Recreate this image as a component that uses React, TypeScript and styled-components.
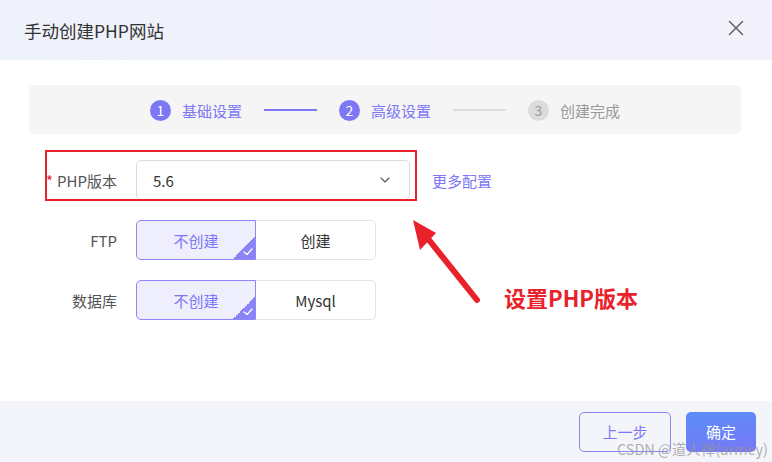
import React from "react";
import styled, { createGlobalStyle, css } from "styled-components";
import { X, ChevronDown } from "lucide-react";

const GlobalStyle = createGlobalStyle`
  html, body {
    margin: 0;
    padding: 0;
    background: #fff;
  }
  body {
    font-family: "Noto Sans CJK SC", "Noto Sans", "Liberation Sans", sans-serif;
    font-size: 14px;
    color: #333;
  }
  * {
    box-sizing: border-box;
  }
`;

const Dialog = styled("div")`
  position: relative;
  width: 772px;
  height: 462px;
  display: flex;
  flex-direction: column;
  background: #fff;
  overflow: hidden;
`;

const Header = styled("div")`
  height: 60px;
  flex-shrink: 0;
  display: flex;
  align-items: center;
  justify-content: space-between;
  padding: 0 23px 0 24px;
  background: linear-gradient(90deg, #eef2fb 0%, #f3f0fb 100%);
`;

const Title = styled("h1")`
  margin: 0;
  font-size: 17.5px;
  font-weight: 400;
  color: #333;
`;

const CloseButton = styled("button")`
  border: none;
  background: transparent;
  padding: 0;
  display: flex;
  color: #666;
  cursor: pointer;
  margin-top: -5px;
`;

const Body = styled("div")`
  flex: 1;
  position: relative;
  padding: 25px 31px 0 29px;
`;

const Steps = styled("div")`
  height: 49px;
  border-radius: 5px;
  background: #f5f5f5;
  display: flex;
  align-items: center;
  justify-content: center;
  padding-top: 1px;
`;

const Step = styled("div")<{ $active: boolean }>`
  display: flex;
  align-items: center;
  gap: 11px;
  font-size: 15px;
  color: ${({ $active }) => ($active ? "#7d77f6" : "#999")};
`;

const StepNum = styled("span")<{ $active: boolean }>`
  width: 21px;
  height: 21px;
  border-radius: 50%;
  display: flex;
  align-items: center;
  justify-content: center;
  font-size: 14px;
  background: ${({ $active }) => ($active ? "#7d77f6" : "#dcdcdc")};
  color: ${({ $active }) => ($active ? "#fff" : "#999")};
`;

const StepLine = styled("span")<{ $active: boolean }>`
  width: 53px;
  height: 2px;
  margin: 0 22px;
  background: ${({ $active }) => ($active ? "#7d77f6" : "#dcdcdc")};
`;

const Form = styled("div")`
  margin-top: 26px;
  display: flex;
  flex-direction: column;
  gap: 20px;
`;

const Row = styled("div")`
  display: flex;
  align-items: center;
  height: 40px;
`;

const Label = styled("label")`
  width: 88px;
  text-align: right;
  margin-right: 19px;
  font-size: 15px;
  color: #555;
`;

const Required = styled("span")`
  color: #e8212b;
  margin-right: 4px;
`;

const Select = styled("div")`
  width: 274px;
  height: 40px;
  border: 1px solid #dcdcdc;
  border-radius: 5px;
  display: flex;
  align-items: center;
  justify-content: space-between;
  padding: 0 16px 0 16px;
  font-size: 15px;
  color: #333;
`;

const MoreLink = styled("a")`
  margin-left: 22px;
  font-size: 15px;
  color: #7d77f6;
  cursor: pointer;
`;

const Segment = styled("div")`
  display: flex;
`;

const SegButton = styled("button")<{ $selected: boolean }>`
  position: relative;
  width: 120px;
  height: 40px;
  font-family: inherit;
  font-size: 15px;
  border: 1px solid #e4e4e4;
  background: #fff;
  color: #333;
  overflow: hidden;
  cursor: pointer;

  &:first-child {
    border-radius: 5px 0 0 5px;
  }
  &:last-child {
    border-radius: 0 5px 5px 0;
    border-left: none;
  }

  ${({ $selected }) =>
    $selected &&
    css`
      background: #efeefd;
      border-color: #8d86f6;
      color: #7d77f6;
    `}
`;

const Corner = styled("span")`
  position: absolute;
  right: 0;
  bottom: 0;
  width: 22px;
  height: 22px;
  background: linear-gradient(135deg, transparent 50%, #8a83f6 50%);
  display: flex;
  align-items: flex-end;
  justify-content: flex-end;
  padding: 0 2px 3px 0;
`;

const Highlight = styled("div")`
  position: absolute;
  left: 45px;
  top: 90px;
  width: 372px;
  height: 51px;
  border: 2px solid #e8212b;
  pointer-events: none;
`;

const Arrow = styled("svg")`
  position: absolute;
  left: 405px;
  top: 155px;
  pointer-events: none;
`;

const Callout = styled("div")`
  position: absolute;
  left: 504px;
  top: 221px;
  font-size: 22px;
  font-weight: 700;
  color: #e8212b;
`;

const Footer = styled("div")`
  height: 61px;
  flex-shrink: 0;
  display: flex;
  align-items: center;
  justify-content: flex-end;
  gap: 15px;
  padding: 0 16px 0 0;
  background: #f4f5fa;
`;

const Button = styled("button")<{ $primary?: boolean }>`
  height: 40px;
  padding: 0;
  border-radius: 5px;
  font-family: inherit;
  font-size: 15px;
  cursor: pointer;
  ${({ $primary }) =>
    $primary
      ? css`
          width: 70px;
          border: none;
          color: #fff;
          background: linear-gradient(170deg, #5a8ef9 0%, #7877f6 100%);
        `
      : css`
          width: 92px;
          border: 1px solid #8d86f6;
          color: #7d77f6;
          background: transparent;
        `}
`;

const Watermark = styled("div")`
  position: absolute;
  right: 4px;
  bottom: 3px;
  font-size: 14.5px;
  color: rgba(150, 150, 150, 0.75);
  pointer-events: none;
  white-space: nowrap;
`;

const Check = () => (
  <svg width="10" height="8" viewBox="0 0 10 8" fill="none">
    <polyline
      points="1 4 4 6.5 9 1"
      stroke="#fff"
      strokeWidth="1.3"
      strokeLinecap="round"
      strokeLinejoin="round"
    />
  </svg>
);

const steps = [
  { n: 1, label: "基础设置", active: true },
  { n: 2, label: "高级设置", active: true },
  { n: 3, label: "创建完成", active: false },
];

function Toggle({ options }: { options: string[] }) {
  return (
    <Segment>
      {options.map((o, i) => (
        <SegButton key={o} $selected={i === 0}>
          {o}
          {i === 0 && (
            <Corner>
              <Check />
            </Corner>
          )}
        </SegButton>
      ))}
    </Segment>
  );
}

export default function App() {
  return (
    <>
      <GlobalStyle />
      <Dialog>
        <Header>
          <Title>手动创建PHP网站</Title>
          <CloseButton aria-label="close">
            <X size={26} strokeWidth={1.4} />
          </CloseButton>
        </Header>
        <Body>
          <Steps>
            {steps.map((s, i) => (
              <React.Fragment key={s.n}>
                {i > 0 && <StepLine $active={s.active} />}
                <Step $active={s.active}>
                  <StepNum $active={s.active}>{s.n}</StepNum>
                  {s.label}
                </Step>
              </React.Fragment>
            ))}
          </Steps>
          <Form>
            <Row>
              <Label>
                <Required>*</Required>PHP版本
              </Label>
              <Select>
                5.6
                <ChevronDown size={16} color="#555" strokeWidth={1.6} />
              </Select>
              <MoreLink>更多配置</MoreLink>
            </Row>
            <Row>
              <Label>FTP</Label>
              <Toggle options={["不创建", "创建"]} />
            </Row>
            <Row>
              <Label>数据库</Label>
              <Toggle options={["不创建", "Mysql"]} />
            </Row>
          </Form>
          <Highlight />
          <Arrow width="80" height="95" viewBox="0 0 80 95">
            <line
              x1="72"
              y1="85"
              x2="20"
              y2="20"
              stroke="#e8212b"
              strokeWidth="6"
              strokeLinecap="round"
            />
            <polygon points="8,5 31,18 15,35" fill="#e8212b" />
          </Arrow>
          <Callout>设置PHP版本</Callout>
        </Body>
        <Footer>
          <Button>上一步</Button>
          <Button $primary>确定</Button>
        </Footer>
        <Watermark>CSDN @道人禅(armey)</Watermark>
      </Dialog>
    </>
  );
}
